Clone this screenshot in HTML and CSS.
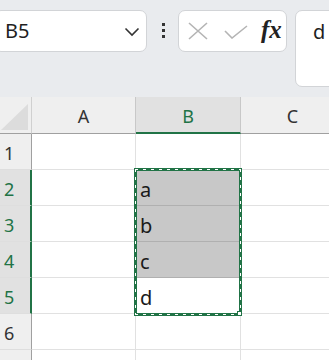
FILE: index.html
```html
<!DOCTYPE html>
<html>
<head>
<meta charset="utf-8">
<link rel="stylesheet" href="styles.css">
</head>
<body>
<div class="toolbar">
  <div class="namebox">
    <span class="name">B5</span>
    <svg class="chev" width="16" height="10" viewBox="0 0 16 10"><path d="M1.5 1.5 L8 8 L14.5 1.5" fill="none" stroke="#333" stroke-width="1.6"/></svg>
  </div>
  <div class="dots"><i></i><i></i><i></i></div>
  <div class="fxbox">
    <svg class="xicon" width="20" height="18" viewBox="0 0 20 18"><path d="M1 1 L19 17 M19 1 L1 17" stroke="#b4b4b4" stroke-width="1.6" fill="none"/></svg>
    <svg class="check" width="24" height="14" viewBox="0 0 24 14"><path d="M1 6 L8 13 L23 1" stroke="#b4b4b4" stroke-width="1.6" fill="none"/></svg>
    <span class="fx">fx</span>
  </div>
  <div class="formula">d</div>
</div>
<div class="sheet">
  <div class="corner"><span class="tri"></span></div>
  <div class="colhead">A</div>
  <div class="colhead sel">B</div>
  <div class="colhead">C</div>

  <div class="rowhead">1</div>
  <div class="cell"></div>
  <div class="cell"></div>
  <div class="cell"></div>

  <div class="rowhead sel">2</div>
  <div class="cell"></div>
  <div class="cell shade">a</div>
  <div class="cell"></div>

  <div class="rowhead sel">3</div>
  <div class="cell"></div>
  <div class="cell shade">b</div>
  <div class="cell"></div>

  <div class="rowhead sel">4</div>
  <div class="cell"></div>
  <div class="cell shade">c</div>
  <div class="cell"></div>

  <div class="rowhead sel">5</div>
  <div class="cell"></div>
  <div class="cell">d</div>
  <div class="cell"></div>

  <div class="rowhead">6</div>
  <div class="cell"></div>
  <div class="cell"></div>
  <div class="cell"></div>

  <div class="rowhead"></div>
  <div class="cell"></div>
  <div class="cell"></div>
  <div class="cell"></div>

  <div class="selection"><span class="handle"></span></div>
</div>
</body>
</html>
```
FILE: styles.css
```css
* { box-sizing: border-box; }
html, body {
  margin: 0;
  padding: 0;
  width: 329px;
  height: 360px;
  overflow: hidden;
  background: #fff;
  font-family: "Noto Sans", "Open Sans", sans-serif;
}
.toolbar {
  height: 97px;
  background: #e9ebee;
  display: flex;
  align-items: flex-start;
  padding-top: 10px;
  overflow: hidden;
}
.namebox {
  flex: none;
  width: 153px;
  height: 42px;
  margin-left: -6px;
  background: #fff;
  border: 1px solid #d2d4d7;
  border-radius: 7px;
  display: flex;
  align-items: center;
  justify-content: space-between;
  padding: 0 6px 0 10px;
}
.name {
  font-size: 20px;
  color: #1f1f1f;
  line-height: 1;
}
.chev { margin-top: 1px; }
.dots {
  flex: none;
  width: 3px;
  margin: 13px 13px 0 15px;
  display: flex;
  flex-direction: column;
  gap: 3px;
}
.dots i {
  display: block;
  width: 3px;
  height: 3px;
  background: #333;
}
.fxbox {
  flex: none;
  width: 109px;
  height: 42px;
  background: #fff;
  border: 1px solid #d2d4d7;
  border-radius: 7px;
  display: flex;
  align-items: center;
  padding-left: 9px;
}
.xicon { margin-right: 16px; }
.check { margin-right: 13px; margin-top: 1px; }
.fx {
  font-family: "Liberation Serif", "DejaVu Serif", serif;
  font-style: italic;
  font-weight: bold;
  font-size: 25px;
  color: #222;
  line-height: 1;
  margin-top: -3px;
}
.formula {
  flex: none;
  width: 60px;
  height: 77px;
  margin-left: 8px;
  background: #fff;
  border: 1px solid #d2d4d7;
  border-radius: 7px;
  padding: 8px 0 0 17px;
  font-size: 20px;
  line-height: 26px;
  color: #1f1f1f;
}
.sheet {
  position: relative;
  display: grid;
  grid-template-columns: 32px 104px 105px 104px;
  grid-template-rows: 37px repeat(7, 36px);
  font-size: 18px;
}
.corner {
  background: #efefef;
  border-right: 1px solid #d0d0d0;
  border-bottom: 1px solid #a0a0a0;
  position: relative;
}
.tri {
  position: absolute;
  left: 1px;
  bottom: 3px;
  width: 27px;
  height: 26px;
  background: #dcdcdc;
  clip-path: polygon(100% 0, 100% 100%, 0 100%);
}
.colhead {
  background: #efefef;
  border-right: 1px solid #c8c8c8;
  border-bottom: 1px solid #a0a0a0;
  display: flex;
  align-items: center;
  justify-content: center;
  color: #333;
  padding-top: 1px;
}
.colhead.sel {
  background: #e1e1e1;
  color: #217346;
  border-bottom: 2px solid #217346;
  padding-top: 2px;
}
.rowhead {
  background: #efefef;
  border-right: 1px solid #a0a0a0;
  border-bottom: 1px solid #dedede;
  display: flex;
  align-items: center;
  padding-left: 4px;
  color: #333;
  padding-top: 2px;
}
.rowhead.sel {
  background: #e1e1e1;
  color: #217346;
  border-right: 2px solid #217346;
}
.cell {
  border-right: 1px solid #e1e1e1;
  border-bottom: 1px solid #e1e1e1;
  display: flex;
  align-items: center;
  padding-left: 4px;
  padding-top: 3px;
  font-size: 20px;
  color: #1a1a1a;
}
.cell.shade {
  background: #c8c8c8;
  border-bottom-color: #b0b0b0;
}
.selection {
  position: absolute;
  grid-column: 3 / 4;
  grid-row: 3 / 7;
  top: -2px;
  left: -2px;
  right: -1px;
  bottom: -2px;
  border: 3px solid #217346;
  z-index: 2;
}
.selection::after {
  content: "";
  position: absolute;
  inset: -2px;
  background:
    repeating-linear-gradient(90deg, #fff 0 3px, transparent 3px 8px) top left / 100% 1px no-repeat,
    repeating-linear-gradient(90deg, #fff 0 3px, transparent 3px 8px) bottom left / 100% 1px no-repeat,
    repeating-linear-gradient(180deg, #fff 0 3px, transparent 3px 8px) top left / 1px 100% no-repeat,
    repeating-linear-gradient(180deg, #fff 0 3px, transparent 3px 8px) top right / 1px 100% no-repeat;
}
.handle {
  position: absolute;
  right: -3px;
  bottom: -3px;
  width: 5px;
  height: 5px;
  background: #fff;
  border: 1px solid #217346;
  z-index: 3;
}
```
